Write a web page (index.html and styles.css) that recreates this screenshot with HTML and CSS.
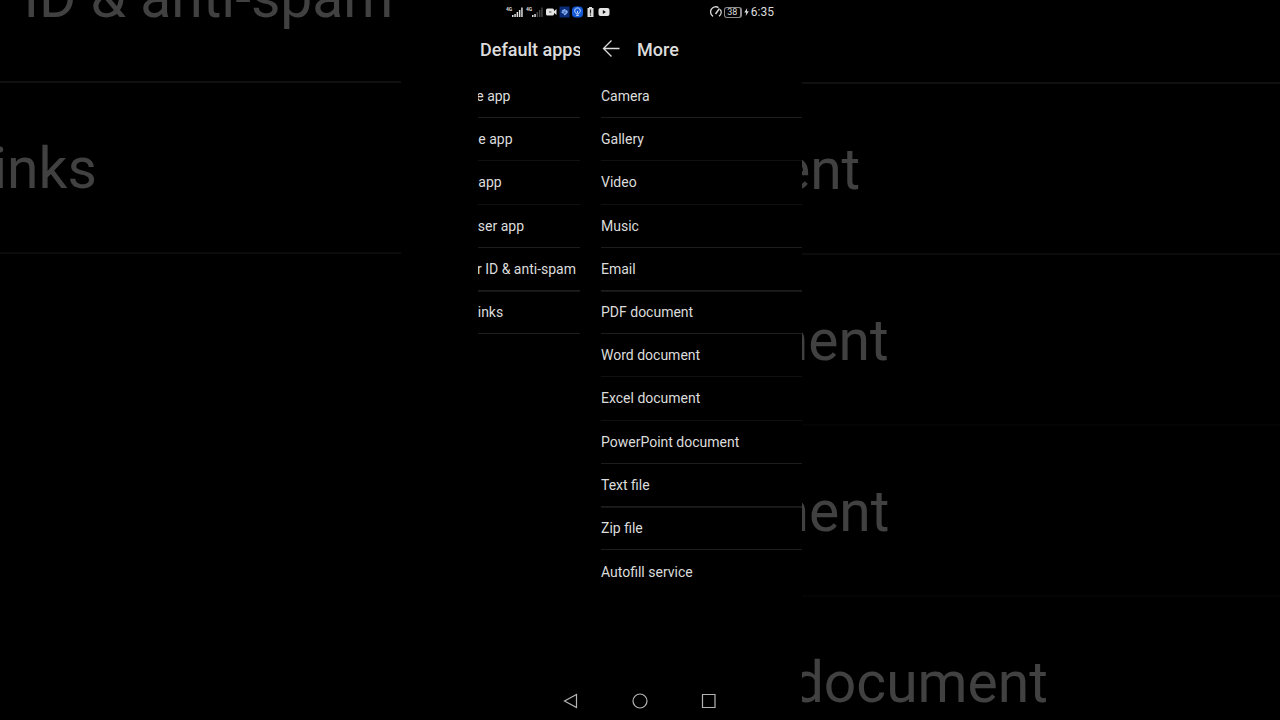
FILE: index.html
```
<!DOCTYPE html>
<html lang="en">
<head>
    <meta charset="UTF-8">
    <meta name="viewport" content="width=device-width, initial-scale=1.0">
    <title>Default apps</title>
    <link rel="stylesheet" href="styles.css">
</head>
<body>
    <div class="stage">
        <!-- enlarged, dimmed copy behind the phone -->
        <div class="backdrop" aria-hidden="true">
            <div class="back-pane back-prev">
                <ul class="back-list">
                    <li>Caller ID &amp; anti-spam</li>
                    <li>App links</li>
                </ul>
            </div>
            <div class="back-pane back-next">
                <ul class="back-list">
                    <li>PDF document</li>
                    <li>Word document</li>
                    <li>Excel document</li>
                    <li>PowerPoint document</li>
                </ul>
            </div>
        </div>

        <main class="phone">
            <div class="status-bar">
                <div class="status-group">
                    <svg width="18" height="12" viewBox="0 0 18 12">
                        <text x="0" y="5" class="net">4G</text>
                        <path d="M6 9h1.500v2H6zM8.300 8h1.500v3H8.300zM10.600 6h1.500v5h-1.500zM12.900 4h1.500v7h-1.500zM15.200 1.500h1.500V11h-1.500z" fill="#ddd"/>
                    </svg>
                    <svg width="18" height="12" viewBox="0 0 18 12">
                        <text x="0" y="5" class="net">4G</text>
                        <path d="M6 9h1.500v2H6zM8.300 8h1.500v3H8.300z" fill="#ddd"/>
                        <path d="M10.600 6h1.500v5h-1.500zM12.900 4h1.500v7h-1.500zM15.200 1.500h1.500V11h-1.500z" fill="#444"/>
                    </svg>
                    <svg width="11" height="12" viewBox="0 0 11 12">
                        <rect x="0" y="2.500" width="8" height="7" rx="1.500" fill="#e4e4e4"/>
                        <path d="M7.500 5.500 10.500 3v6L7.500 6.500z" fill="#e4e4e4"/>
                        <path d="M3 6h2.500" stroke="#555"/>
                    </svg>
                    <svg width="11" height="12" viewBox="0 0 11 12">
                        <rect x="0.500" y="0.500" width="10" height="11" fill="#0b2c78"/>
                        <path d="M3 4.500 5.500 3 8 4.500 9 6 7.500 8 5.500 9.500 4.500 7.500 2.500 7z" fill="#8fb4f2"/>
                        <path d="M3.500 5.500 7.500 7M6.500 4 5 8" stroke="#2c56b0" stroke-width=".7"/>
                    </svg>
                    <svg width="11" height="12" viewBox="0 0 11 12">
                        <rect x="0" y="0.500" width="11" height="11" rx="4" fill="#1459d8"/>
                        <path d="M4.300 8V7.300a2.800 2.800 0 1 1 2.400 0V8zM4.300 9.500h2.400M5.500 7V5" fill="none" stroke="#d7e6ff" stroke-width=".9"/>
                    </svg>
                    <svg width="11" height="12" viewBox="0 0 11 12">
                        <path d="M4 1h3v1h1.500v9h-6V2H4z" fill="#ddd"/>
                        <path d="M5.500 3.500v4M5.500 8.500v1.200" stroke="#222" stroke-width="1.200"/>
                    </svg>
                    <svg width="12" height="12" viewBox="0 0 12 12">
                        <rect x="0.500" y="2" width="11" height="8" rx="2" fill="#e4e4e4"/>
                        <path d="M4.800 4v4L8 6z" fill="#111"/>
                    </svg>
                </div>
                <div class="status-group">
                    <svg width="12" height="12" viewBox="0 0 12 12">
                        <path d="M3 10.300A5 5 0 0 1 8.500 1.600M10.300 3.500a5 5 0 0 1-1.300 6.800" fill="none" stroke="#d4d4d4" stroke-width="1.400"/>
                        <path d="M5.500 8 9.500 2.500" stroke="#d4d4d4" stroke-width="1.500"/>
                    </svg>
                    <span class="battery">38</span>
                    <svg width="5" height="12" viewBox="0 0 5 12">
                        <path d="M3.200 2 .3 6.600h1.900L1.700 10 4.800 5.300H2.900z" fill="#ddd"/>
                    </svg>
                    <span class="clock">6:35</span>
                </div>
            </div>

            <div class="pages">
                <section class="page page-prev">
                    <header class="page-header">
                        <button class="back-btn" type="button" aria-label="Back">
                            <svg width="20" height="20" viewBox="0 0 20 20"><path d="M18.500 9.500H2.500M10.500 1.500l-8 8 8 8"/></svg>
                        </button>
                        <h2>Default apps</h2>
                    </header>
                    <ul class="list">
                        <li><a href="#">Home app</a></li>
                        <li><a href="#">Phone app</a></li>
                        <li><a href="#">SMS app</a></li>
                        <li><a href="#">Browser app</a></li>
                        <li><a href="#">Caller ID &amp; anti-spam</a></li>
                        <li><a href="#">App links</a></li>
                    </ul>
                </section>

                <section class="page page-next">
                    <header class="page-header">
                        <button class="back-btn" type="button" aria-label="Back">
                            <svg width="20" height="20" viewBox="0 0 20 20"><path d="M18.500 9.500H2.500M10.500 1.500l-8 8 8 8"/></svg>
                        </button>
                        <h1>More</h1>
                    </header>
                    <ul class="list">
                        <li><a href="#">Camera</a></li>
                        <li><a href="#">Gallery</a></li>
                        <li><a href="#">Video</a></li>
                        <li><a href="#">Music</a></li>
                        <li><a href="#">Email</a></li>
                        <li><a href="#">PDF document</a></li>
                        <li><a href="#">Word document</a></li>
                        <li><a href="#">Excel document</a></li>
                        <li><a href="#">PowerPoint document</a></li>
                        <li><a href="#">Text file</a></li>
                        <li><a href="#">Zip file</a></li>
                        <li class="last"><a href="#">Autofill service</a></li>
                    </ul>
                </section>
            </div>

            <nav class="nav-bar">
                <button type="button" aria-label="Back">
                    <svg width="18" height="18" viewBox="0 0 18 18"><path d="M14.500 2.500v13L2.500 9z"/></svg>
                </button>
                <button type="button" aria-label="Home">
                    <svg width="18" height="18" viewBox="0 0 18 18"><circle cx="9" cy="9" r="7"/></svg>
                </button>
                <button type="button" aria-label="Recent apps">
                    <svg width="18" height="18" viewBox="0 0 18 18"><path d="M2.500 2.500h12.500v13H2.500z"/></svg>
                </button>
            </nav>
        </main>
    </div>
</body>
</html>
```

FILE: styles.css
```
* {
    box-sizing: border-box;
}
body {
    margin: 0;
    background-color: #000;
    color: #dcdcdc;
    font-family: Roboto, "Liberation Sans", sans-serif;
}
ul {
    list-style: none;
    margin: 0;
    padding: 0;
}
button {
    display: flex;
    padding: 0;
    border: none;
    background: none;
    cursor: pointer;
}
.stage {
    position: relative;
    min-height: 100vh;
    overflow: hidden;
}

/* backdrop */
.backdrop {
    position: absolute;
    inset: 0;
    display: flex;
    overflow: hidden;
    color: #414141;
    font-size: 57px;
    line-height: 172px;
    white-space: nowrap;
}
.back-pane {
    overflow: hidden;
}
.back-prev {
    width: 401px;
}
.back-prev .back-list {
    margin-top: -88px;
    margin-left: -136px;
}
.back-next {
    flex: 1;
    padding-left: 84px;
}
.back-next .back-list {
    margin-top: 82px;
    border-top: 2px solid #101010;
}
.back-list li {
    height: 171px;
    border-bottom: 2px solid #0b0b0b;
}
.back-prev li:first-child {
    border-color: #101010;
}
.back-next li:nth-child(n+2) {
    border-color: #040404;
}

/* phone */
.phone {
    position: relative;
    display: flex;
    flex-direction: column;
    width: 324px;
    min-height: 100vh;
    margin: 0 auto;
    background-color: #000;
}
.status-bar {
    display: flex;
    align-items: center;
    justify-content: space-between;
    height: 24px;
    padding: 0 28px;
}
.status-group {
    display: flex;
    align-items: center;
    gap: 2px;
}
.net {
    font-size: 5px;
    font-weight: 700;
    fill: #ddd;
}
.battery {
    width: 18px;
    border: 1px solid #8c8c8c;
    border-right-width: 2px;
    border-radius: 3px;
    font-size: 9px;
    line-height: 9px;
    text-align: center;
}
.clock {
    font-size: 12px;
}
.pages {
    display: flex;
    flex: 1;
}
.page {
    overflow: hidden;
}
.page-prev {
    width: 102px;
}
.page-prev .page-header {
    margin-left: -34px;
}
.page-prev .list {
    margin-left: -32px;
}
.page-next {
    flex: 1;
    padding-left: 21px;
}
.page-header {
    display: flex;
    align-items: center;
    gap: 16px;
    height: 50px;
    white-space: nowrap;
}
.page-header h1,
.page-header h2 {
    margin: 0;
    font-size: 18px;
    font-weight: 500;
}
.back-btn svg {
    fill: none;
    stroke: #dcdcdc;
    stroke-width: 1.3;
}
.list {
    padding-top: 1px;
}
.list li {
    display: flex;
    height: 6vh;
    border-bottom: 1px solid #1d1d1d;
}
.list li:nth-child(5n+2),
.list li:nth-child(5n+3) {
    border-color: #101010;
}
.list li:nth-child(5n) {
    box-shadow: 0 1px #161616;
}
.list li.last {
    border: none;
}
.list a {
    display: flex;
    flex: 1;
    align-items: center;
    color: inherit;
    font-size: 14px;
    text-decoration: none;
    white-space: nowrap;
}
.nav-bar {
    display: flex;
    align-items: center;
    justify-content: center;
    gap: 51px;
    height: 38px;
}
.nav-bar svg {
    fill: none;
    stroke: #b4b4b4;
    stroke-width: 1.2;
}
```
